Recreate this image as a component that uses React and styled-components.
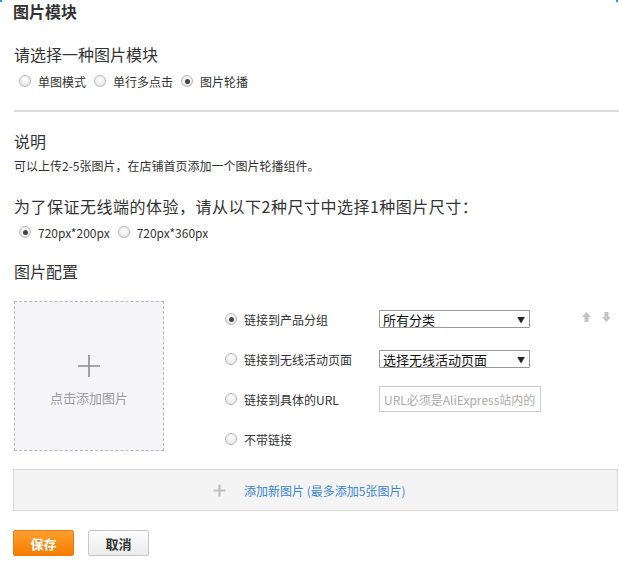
import React from "react";
import styled, { createGlobalStyle } from "styled-components";

const Global = createGlobalStyle`
  html, body { margin: 0; padding: 0; background: #fff; }
  body { font-family: "Noto Sans CJK SC", "Liberation Sans", sans-serif; color: #333; }
  * { box-sizing: border-box; }
`;

const Page = styled.div`
  width: 619px;
  height: 561px;
  position: relative;
  overflow: hidden;
  padding: 0 0 0 13px;
  display: flex;
  flex-direction: column;
`;

const CornerMark = styled.span`
  position: absolute;
  top: 0;
  ${(p) => (p.$right ? "right: 1px;" : "left: 0;")}
  width: 2px;
  height: 2px;
  background: #1e90ff;
`;

const Title = styled.h1`
  margin: 0;
  height: 22px;
  line-height: 22px;
  font-size: 16px;
  font-weight: bold;
  color: #333;
`;

const SectionTitle = styled.div`
  margin-top: ${(p) => p.$mt}px;
  height: 20px;
  line-height: 20px;
  font-size: 16px;
  letter-spacing: ${(p) => (p.$wide ? "0.5px" : "0")};
  color: #333;
  padding-left: 1px;
  white-space: nowrap;
`;

const Note = styled.div`
  margin-top: ${(p) => p.$mt}px;
  font-size: 12px;
  line-height: 14px;
  color: #333;
  padding-left: 1px;
`;

const RadioRow = styled.div`
  margin-top: ${(p) => p.$mt}px;
  display: flex;
  align-items: center;
  gap: 8px;
  height: 16px;
  padding-left: 6px;
`;

const RadioLabel = styled.label`
  display: flex;
  align-items: center;
  gap: 7px;
  font-size: 12px;
  color: #333;
  white-space: nowrap;
`;

const RadioDot = styled.span`
  width: 12px;
  height: 12px;
  border-radius: 50%;
  border: 1px solid #b8b8b8;
  background: radial-gradient(circle at 50% 35%, #fff 0%, #e9e9e9 70%, #dcdcdc 100%);
  display: inline-flex;
  align-items: center;
  justify-content: center;
  flex: none;
  &::after {
    content: "";
    width: 5px;
    height: 5px;
    border-radius: 50%;
    background: ${(p) => (p.$checked ? "#444" : "transparent")};
  }
`;

const Divider = styled.hr`
  margin: 21px 0 0 1px;
  border: none;
  height: 2px;
  background: #dcdcdc;
`;

const ConfigArea = styled.div`
  margin-top: 20px;
  display: flex;
  align-items: flex-start;
  padding-left: 1px;
`;

const Uploader = styled.div`
  width: 150px;
  height: 150px;
  border: 1px dashed #b9b9b9;
  background: #f5f5f9;
  display: flex;
  flex-direction: column;
  align-items: center;
  justify-content: center;
  color: #9a9a9a;
  padding-top: 8px;
`;

const UploadText = styled.div`
  font-size: 13px;
  margin-top: 10px;
  color: #9c9c9c;
`;

const LinkOptions = styled.div`
  margin-left: 61px;
  margin-top: 5px;
  display: flex;
  flex-direction: column;
  gap: 14px;
`;

const OptionRow = styled.div`
  display: flex;
  align-items: center;
  height: 26px;
`;

const OptionLabel = styled(RadioLabel)`
  width: 154px;
  font-size: 12px;
  gap: 7px;
`;

const Select = styled.div`
  width: 151px;
  height: 18px;
  border: 1px solid #999;
  border-radius: 1px;
  background: #fff;
  display: flex;
  align-items: center;
  justify-content: space-between;
  padding: 0 4px 0 3px;
  font-size: 13px;
  color: #111;
`;

const Caret = styled.span`
  font-size: 8px;
  color: #222;
`;

const TextInput = styled.div`
  width: 162px;
  height: 26px;
  border: 1px solid #ccc;
  background: #fff;
  display: flex;
  align-items: center;
  padding-left: 4px;
  font-size: 12px;
  color: #aaa;
  white-space: nowrap;
  overflow: hidden;
`;

const SortArrows = styled.div`
  display: flex;
  gap: 11px;
  margin-left: 52px;
  margin-top: -4px;
`;

const AddBar = styled.div`
  margin-top: 17px;
  width: 605px;
  height: 42px;
  background: #f4f4f4;
  border: 1px solid #d9d9d9;
  display: flex;
  align-items: center;
  gap: 18px;
  padding-left: 199px;
`;

const AddText = styled.span`
  font-size: 12px;
  color: #3a85d6;
`;

const Buttons = styled.div`
  margin-top: 19px;
  display: flex;
  gap: 14px;
`;

const Button = styled.button`
  width: 61px;
  height: 26px;
  border-radius: 2px;
  font-family: inherit;
  font-size: 13px;
  font-weight: bold;
  padding: 0;
  cursor: pointer;
  color: ${(p) => (p.$primary ? "#fff" : "#333")};
  border: 1px solid ${(p) => (p.$primary ? "#ef7a0c" : "#c8c8c8")};
  background: ${(p) =>
    p.$primary
      ? "linear-gradient(#ffa030, #f57c00)"
      : "linear-gradient(#fdfdfd, #ececec)"};
`;

const Radio = ({ checked, children, as: C = RadioLabel }) => (
  <C>
    <RadioDot $checked={checked} />
    {children}
  </C>
);

const Plus = ({ size, color, stroke }) => (
  <svg width={size} height={size} viewBox="0 0 24 24">
    <path d="M12 1v22M1 12h22" stroke={color} strokeWidth={stroke} fill="none" />
  </svg>
);

const Arrow = ({ down }) => (
  <svg width="9" height="10" viewBox="0 0 9 10" style={{ transform: down ? "rotate(180deg)" : "none" }}>
    <path d="M4.5 0L9 5H6.5V10H2.5V5H0Z" fill="#c4c4c4" />
  </svg>
);

export default function App() {
  return (
    <>
      <Global />
      <Page>
        <CornerMark />
        <CornerMark $right />
        <Title>图片模块</Title>
        <SectionTitle $mt={22}>请选择一种图片模块</SectionTitle>
        <RadioRow $mt={9}>
          <Radio>单图模式</Radio>
          <Radio>单行多点击</Radio>
          <Radio checked>图片轮播</Radio>
        </RadioRow>
        <Divider />
        <SectionTitle $mt={19}>说明</SectionTitle>
        <Note $mt={8}>可以上传2-5张图片，在店铺首页添加一个图片轮播组件。</Note>
        <SectionTitle $mt={23} $wide>
          为了保证无线端的体验，请从以下2种尺寸中选择1种图片尺寸：
        </SectionTitle>
        <RadioRow $mt={8}>
          <Radio checked>720px*200px</Radio>
          <Radio>720px*360px</Radio>
        </RadioRow>
        <SectionTitle $mt={21}>图片配置</SectionTitle>
        <ConfigArea>
          <Uploader>
            <Plus size={24} color="#8c8c8c" stroke={1.6} />
            <UploadText>点击添加图片</UploadText>
          </Uploader>
          <LinkOptions>
            <OptionRow>
              <Radio checked as={OptionLabel}>链接到产品分组</Radio>
              <Select>
                所有分类<Caret>▼</Caret>
              </Select>
              <SortArrows>
                <Arrow />
                <Arrow down />
              </SortArrows>
            </OptionRow>
            <OptionRow>
              <Radio as={OptionLabel}>链接到无线活动页面</Radio>
              <Select>
                选择无线活动页面<Caret>▼</Caret>
              </Select>
            </OptionRow>
            <OptionRow>
              <Radio as={OptionLabel}>链接到具体的URL</Radio>
              <TextInput>URL必须是AliExpress站内的</TextInput>
            </OptionRow>
            <OptionRow>
              <Radio as={OptionLabel}>不带链接</Radio>
            </OptionRow>
          </LinkOptions>
        </ConfigArea>
        <AddBar>
          <Plus size={13} color="#bdbdbd" stroke={4} />
          <AddText>添加新图片 (最多添加5张图片)</AddText>
        </AddBar>
        <Buttons>
          <Button $primary>保存</Button>
          <Button>取消</Button>
        </Buttons>
      </Page>
    </>
  );
}
